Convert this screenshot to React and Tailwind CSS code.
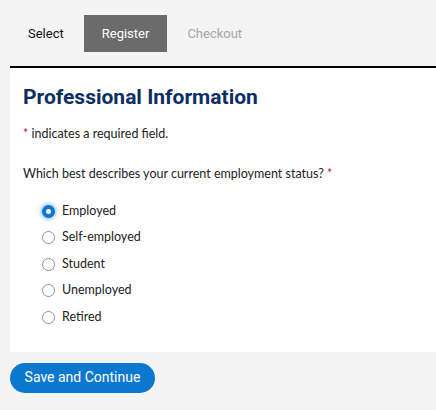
import React from 'react';

const options = ['Employed', 'Self-employed', 'Student', 'Unemployed', 'Retired'];

const Radio = ({ checked }) =>
  checked ? (
    <span className="flex h-[13px] w-[13px] items-center justify-center rounded-full bg-[#0b78cf] shadow-[0_0_4px_1px_rgba(30,140,230,0.6)]">
      <span className="h-[5px] w-[5px] rounded-full bg-white"></span>
    </span>
  ) : (
    <span className="h-[13px] w-[13px] rounded-full border border-[#8f8f8f] bg-white"></span>
  );

const App = () => {
  return (
    <div className="min-h-[410px] bg-[#f4f4f4] pl-[10px] pt-[15px] font-['Lato',sans-serif] text-[#222]">
      <div className="flex h-[37px] items-stretch gap-[2px] text-[13px] font-['Roboto',sans-serif]">
        <div className="flex items-center px-[18px] text-[#111]">Select</div>
        <div className="flex items-center bg-[#6b6b6b] px-[18px] text-white">Register</div>
        <div className="flex items-center px-[18px] text-[#a6a6a6]">Checkout</div>
      </div>

      <div className="mt-[14px] border-t-2 border-black bg-white pb-[21px] pl-[13px] pt-[17px]">
        <h2 className="font-['Roboto',sans-serif] text-[21px] font-bold leading-[24px] text-[#0b2f63]">
          Professional Information
        </h2>
        <p className="mt-[17px] text-[12.5px] leading-[16px]">
          <span className="text-[#c8102e]">*</span> indicates a required field.
        </p>
        <p className="mt-[24px] text-[12.5px] leading-[16px]">
          Which best describes your current employment status? <span className="text-[#c8102e]">*</span>
        </p>
        <div className="mt-[16px] flex flex-col pl-[19px]">
          {options.map((o, i) => (
            <label key={o} className="flex h-[26.5px] items-center gap-[7px] text-[12.5px]">
              <Radio checked={i === 0} />
              <span>{o}</span>
            </label>
          ))}
        </div>
      </div>

      <button className="mt-[11px] h-[30px] w-[145px] rounded-full bg-[#0b78cf] font-['Roboto',sans-serif] text-[14px] text-white">
        Save and Continue
      </button>
    </div>
  );
};

export default App;
